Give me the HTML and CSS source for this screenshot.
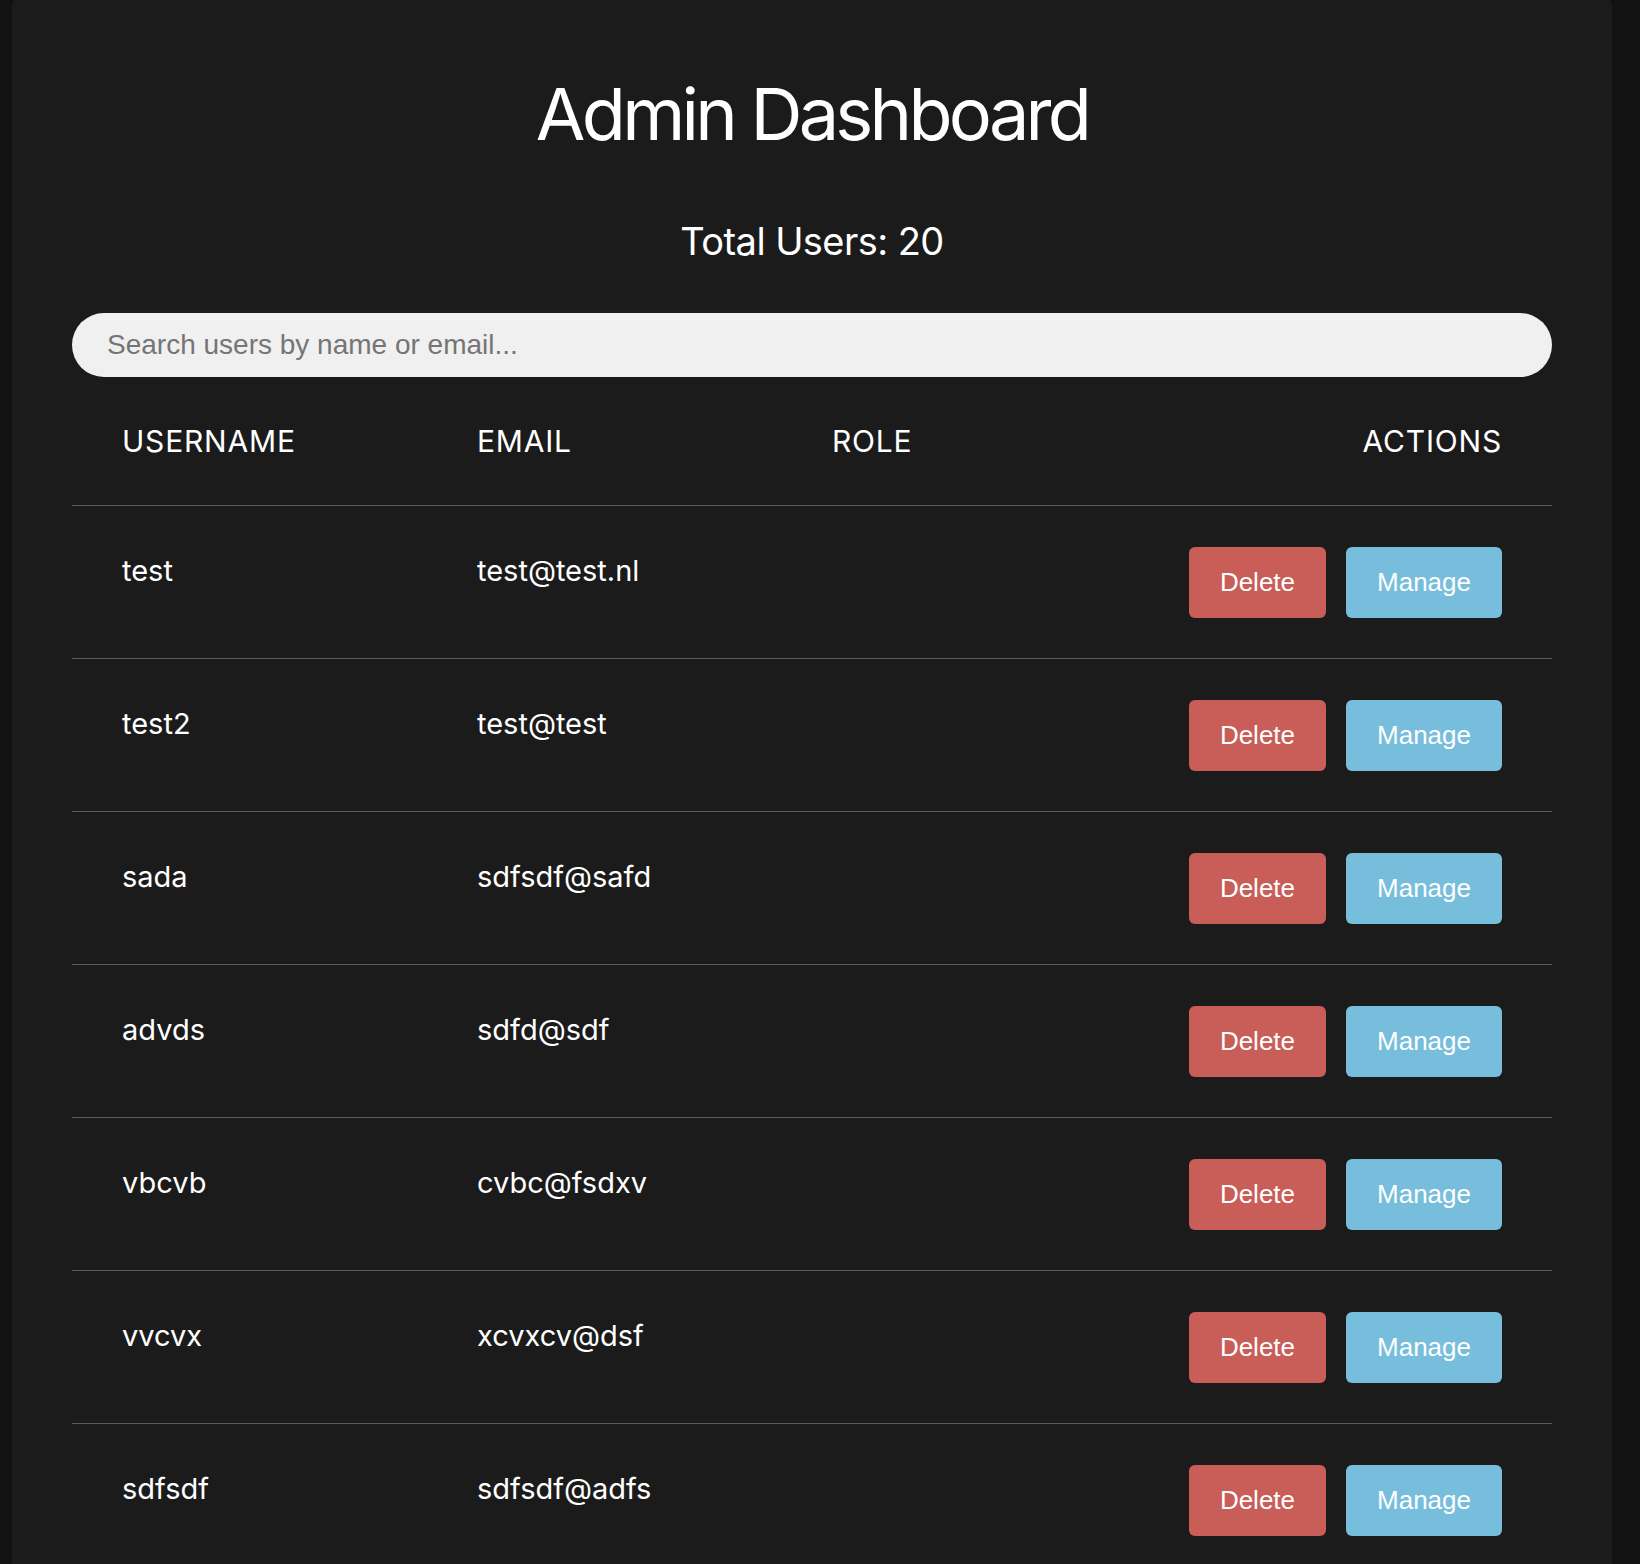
FILE: index.html
```html
<!DOCTYPE html>
<html lang="en">
<head>
<meta charset="utf-8">
<title>Admin Dashboard</title>
<link rel="stylesheet" href="styles.css">
</head>
<body>
<main class="card">
  <h1 class="title">Admin Dashboard</h1>
  <p class="total">Total Users: 20</p>
  <input class="search" type="text" placeholder="Search users by name or email...">
  <table class="users">
    <thead>
      <tr>
        <th>Username</th>
        <th>Email</th>
        <th>Role</th>
        <th class="actions-head">Actions</th>
      </tr>
    </thead>
    <tbody>
      <tr>
        <td class="txt">test</td>
        <td class="txt">test@test.nl</td>
        <td class="txt"></td>
        <td class="actions"><button class="btn btn-delete">Delete</button><button class="btn btn-manage">Manage</button></td>
      </tr>
      <tr>
        <td class="txt">test2</td>
        <td class="txt">test@test</td>
        <td class="txt"></td>
        <td class="actions"><button class="btn btn-delete">Delete</button><button class="btn btn-manage">Manage</button></td>
      </tr>
      <tr>
        <td class="txt">sada</td>
        <td class="txt">sdfsdf@safd</td>
        <td class="txt"></td>
        <td class="actions"><button class="btn btn-delete">Delete</button><button class="btn btn-manage">Manage</button></td>
      </tr>
      <tr>
        <td class="txt">advds</td>
        <td class="txt">sdfd@sdf</td>
        <td class="txt"></td>
        <td class="actions"><button class="btn btn-delete">Delete</button><button class="btn btn-manage">Manage</button></td>
      </tr>
      <tr>
        <td class="txt">vbcvb</td>
        <td class="txt">cvbc@fsdxv</td>
        <td class="txt"></td>
        <td class="actions"><button class="btn btn-delete">Delete</button><button class="btn btn-manage">Manage</button></td>
      </tr>
      <tr>
        <td class="txt">vvcvx</td>
        <td class="txt">xcvxcv@dsf</td>
        <td class="txt"></td>
        <td class="actions"><button class="btn btn-delete">Delete</button><button class="btn btn-manage">Manage</button></td>
      </tr>
      <tr>
        <td class="txt">sdfsdf</td>
        <td class="txt">sdfsdf@adfs</td>
        <td class="txt"></td>
        <td class="actions"><button class="btn btn-delete">Delete</button><button class="btn btn-manage">Manage</button></td>
      </tr>
    </tbody>
  </table>
</main>
</body>
</html>
```

FILE: styles.css
```css
html, body {
  height: 100%;
  overflow: hidden;
}

body {
  margin: 0;
  background: #121212;
  font-family: Inter, "Noto Sans", sans-serif;
  color: #ffffff;
}

.card {
  box-sizing: border-box;
  width: 1600px;
  margin: -4px 0 0 12px;
  padding: 75px 60px 0;
  background: #1b1b1b;
  border-radius: 10px;
  min-height: 1700px;
}

.title {
  margin: 0;
  font-size: 72px;
  line-height: 86px;
  font-weight: 400;
  letter-spacing: -0.052em;
  text-align: center;
}

.total {
  margin: 61px 0 0;
  font-size: 38px;
  line-height: 46px;
  font-weight: 400;
  letter-spacing: -0.015em;
  text-align: center;
}

.search {
  display: block;
  box-sizing: border-box;
  width: 100%;
  height: 64px;
  margin: 49px 0 0;
  padding: 0 35px;
  border: none;
  border-radius: 32px;
  background: #f0f0f0;
  font-family: "Liberation Sans", Arial, sans-serif;
  font-size: 28px;
  color: #333;
  outline: none;
}

.search::placeholder {
  color: #757575;
}

.users {
  width: 100%;
  border-collapse: collapse;
  table-layout: fixed;
}

.users th {
  padding: 46px 50px 46px;
  font-size: 30px;
  font-weight: 400;
  letter-spacing: 0.8px;
  text-transform: uppercase;
  text-align: left;
  border-bottom: 1px solid #5a5a5a;
  width: 255px;
}

.users th.actions-head {
  text-align: right;
  width: 315px;
}

.users td {
  padding: 41px 50px 40px;
  border-bottom: 1px solid #5a5a5a;
  vertical-align: top;
}

.users td.txt {
  padding-top: 47px;
  font-size: 29px;
}

.users td.actions {
  text-align: right;
  white-space: nowrap;
  font-size: 0;
}

.btn {
  display: inline-block;
  box-sizing: border-box;
  height: 71px;
  border: none;
  border-radius: 6px;
  padding: 0 31px;
  font-family: "Liberation Sans", Arial, sans-serif;
  font-size: 26px;
  line-height: 71px;
  color: #ffffff;
  cursor: pointer;
  vertical-align: top;
}

.btn + .btn {
  margin-left: 20px;
}

.btn-delete {
  background: #c95d57;
}

.btn-manage {
  background: #77bddc;
}
```
